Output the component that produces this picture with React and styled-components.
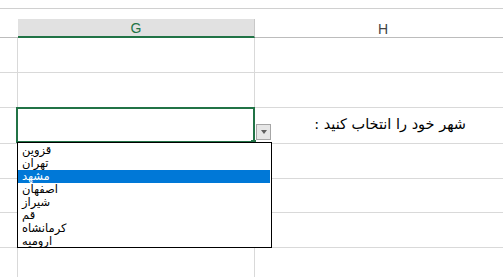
import React from "react";
import styled, { createGlobalStyle } from "styled-components";

const Global = createGlobalStyle`
  html, body { margin: 0; padding: 0; background: #fff; }
  body { font-family: "DejaVu Sans", "Liberation Sans", sans-serif; }
`;

const Sheet = styled.div`
  position: relative;
  width: 503px;
  height: 277px;
  overflow: hidden;
  background: #fff;
`;

const TopBar = styled.div`
  height: 8px;
  border-bottom: 1px solid #d0d0d0;
`;

const Gap = styled.div`
  height: 10px;
`;

const Grid = styled.div`
  display: grid;
  grid-template-columns: 18px 237px 256px;
  grid-template-rows: 19px 35px 35px 36px 35px 34px 35px 35px;
`;

const HeaderCell = styled.div`
  display: flex;
  align-items: center;
  justify-content: center;
  font-family: "Liberation Sans", Arial, sans-serif;
  font-size: 14px;
  color: ${(p) => (p.$active ? "#217346" : "#444")};
  background: ${(p) => (p.$active ? "#e1e1e1" : "#fff")};
  border-bottom: ${(p) => (p.$active ? "2px solid #217346" : "1px solid #bcbcbc")};
  border-right: ${(p) => (p.$edge ? "1px solid #c8c8c8" : "none")};
  box-sizing: border-box;
  min-width: 0;
  padding-top: 1px;
`;

const Cell = styled.div`
  border-bottom: 1px solid #d9d9d9;
  border-right: ${(p) => (p.$edge ? "1px solid #d9d9d9" : "none")};
  box-sizing: border-box;
  min-width: 0;
  display: flex;
  align-items: center;
  justify-content: flex-end;
`;

const Label = styled.span`
  direction: rtl;
  white-space: nowrap;
  font-size: 14.5px;
  color: #000;
  margin-right: 45px;
  margin-bottom: 3px;
`;

const Selection = styled.div`
  position: absolute;
  left: 16px;
  top: 107px;
  width: 239px;
  height: 36px;
  border: 2px solid #217346;
  box-sizing: border-box;
`;

const Handle = styled.div`
  position: absolute;
  left: 251px;
  top: 140px;
  width: 5px;
  height: 4px;
  background: #217346;
`;

const DropButton = styled.div`
  position: absolute;
  left: 256px;
  top: 124px;
  width: 15px;
  height: 16px;
  box-sizing: border-box;
  background: #e6e6e6;
  border: 1px solid #a6a6a6;
  display: flex;
  align-items: center;
  justify-content: center;
`;

const Arrow = styled.div`
  width: 0;
  height: 0;
  border-left: 3.5px solid transparent;
  border-right: 3.5px solid transparent;
  border-top: 4px solid #5f5f5f;
`;

const ListBox = styled.div`
  position: absolute;
  left: 17px;
  top: 142px;
  width: 255px;
  height: 106px;
  box-sizing: border-box;
  border: 1px solid #000;
  background: #fff;
  padding-top: 1px;
`;

const Item = styled.div`
  height: 13px;
  line-height: 13px;
  padding-left: 4px;
  margin-right: 1px;
  font-size: 11.5px;
  color: ${(p) => (p.$selected ? "#fff" : "#000")};
  background: ${(p) => (p.$selected ? "#0078d7" : "transparent")};
  text-align: left;
  white-space: nowrap;
  overflow: hidden;
`;

const ItemText = styled.span`
  direction: rtl;
  unicode-bidi: isolate;
`;

const cities = ["قزوین", "تهران", "مشهد", "اصفهان", "شیراز", "قم", "کرمانشاه", "ارومیه"];

export default function App() {
  const rows = 7;
  return (
    <>
      <Global />
      <Sheet>
        <TopBar />
        <Gap />
        <Grid>
          <HeaderCell />
          <HeaderCell $active $edge>G</HeaderCell>
          <HeaderCell>H</HeaderCell>
          {Array.from({ length: rows }).map((_, r) => (
            <React.Fragment key={r}>
              <Cell $edge />
              <Cell $edge />
              <Cell>{r === 2 ? <Label>شهر خود را انتخاب کنید :</Label> : null}</Cell>
            </React.Fragment>
          ))}
        </Grid>
        <Selection />
        <Handle />
        <DropButton>
          <Arrow />
        </DropButton>
        <ListBox>
          {cities.map((c, i) => (
            <Item key={c} $selected={i === 2}>
              <ItemText>{c}</ItemText>
            </Item>
          ))}
        </ListBox>
      </Sheet>
    </>
  );
}
